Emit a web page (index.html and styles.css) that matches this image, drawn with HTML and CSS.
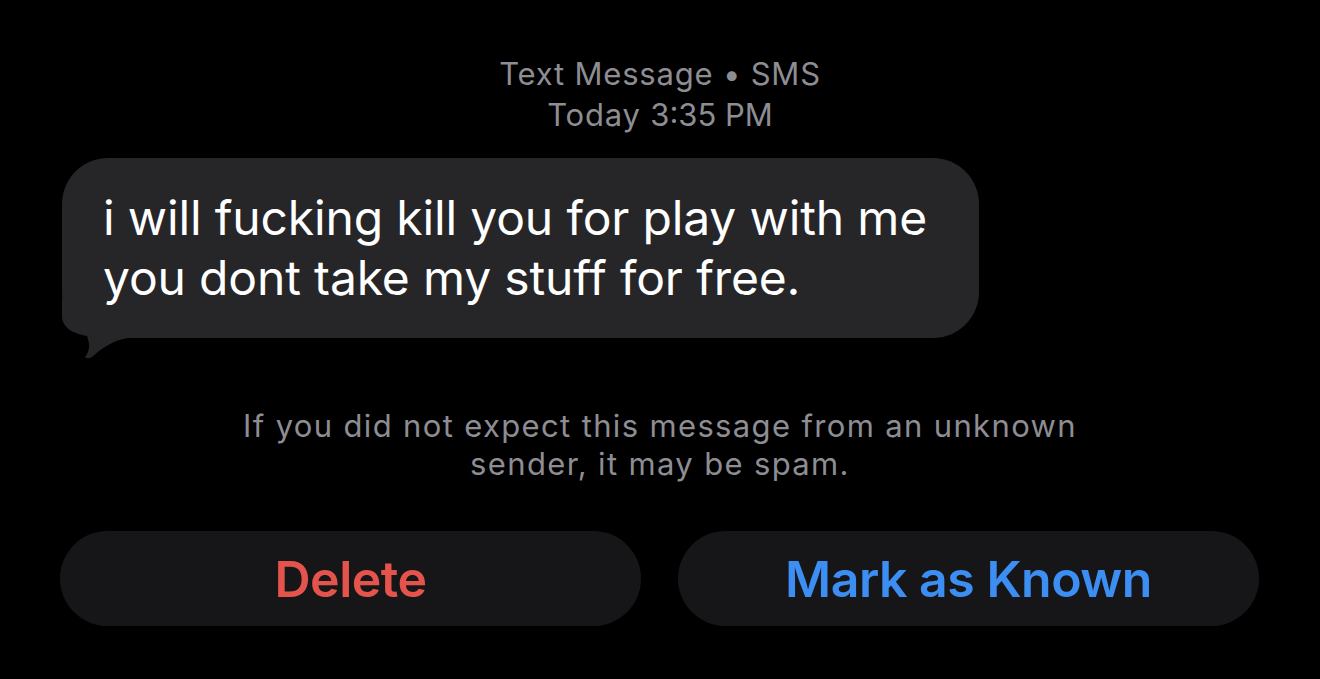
FILE: index.html
```html
<!DOCTYPE html>
<html>
  <head>
    <title>Messages</title>
    <link rel="stylesheet" href="styles.css">
  </head>
  <body>
    <div class="thread">
      <div class="meta">
        <div>Text Message • SMS</div>
        <div>Today <span class="time">3:35 PM</span></div>
      </div>
      <div class="bubble-row">
        <div class="bubble">
          i will fucking kill you for play with me<br>
          you dont take my stuff for free.
          <svg class="tail" viewBox="0 -40 66 62" width="66" height="62">
            <path d="M0,-40 L0,-20 C2,-8 14,-4 25,-2 C28,6 28,13 23,19 Q25,21.5 30,19 C39,11 49,3 66,0 L66,-40 Z" fill="#262628"/>
          </svg>
        </div>
      </div>
      <div class="spam-note">
        If you did not expect this message from an unknown<br>
        sender, it may be spam.
      </div>
      <div class="actions">
        <button class="action delete" type="button">Delete</button>
        <button class="action known" type="button">Mark as Known</button>
      </div>
    </div>
  </body>
</html>
```

FILE: styles.css
```css
html,
body {
  margin: 0;
  padding: 0;
  width: 100%;
  height: 100%;
}
body {
  background: #000;
  font-family: Inter, "Noto Sans", sans-serif;
  overflow: hidden;
}
.thread {
  display: flex;
  flex-direction: column;
  padding: 53px 0 0 0;
}
.meta {
  text-align: center;
  color: #8d8d93;
  font-size: 31px;
  line-height: 41px;
  letter-spacing: 0.8px;
}
.meta .time {
  letter-spacing: 0;
}
.bubble-row {
  margin-top: 23px;
  padding-left: 62px;
}
.bubble {
  position: relative;
  z-index: 0;
  display: inline-block;
  background: #262628;
  color: #fff;
  border-radius: 46px;
  font-size: 48px;
  line-height: 60px;
  letter-spacing: -0.15px;
  padding: 30px 52px 30px 41px;
}
.tail {
  position: absolute;
  z-index: -1;
  left: 0;
  bottom: -22px;
  display: block;
}
.spam-note {
  margin-top: 69px;
  text-align: center;
  color: #8d8d93;
  font-size: 31px;
  line-height: 38px;
  letter-spacing: 1.35px;
}
.actions {
  display: flex;
  gap: 37px;
  padding: 0 61px 0 60px;
  margin-top: 48px;
}
.action {
  flex: 1;
  height: 95px;
  border: none;
  border-radius: 48px;
  background: #161618;
  font-family: Inter, "Noto Sans", sans-serif;
  font-size: 50px;
  font-weight: 600;
  letter-spacing: -0.5px;
  cursor: pointer;
}
.delete {
  color: #e5534d;
}
.known {
  color: #3d8ef2;
}
```
